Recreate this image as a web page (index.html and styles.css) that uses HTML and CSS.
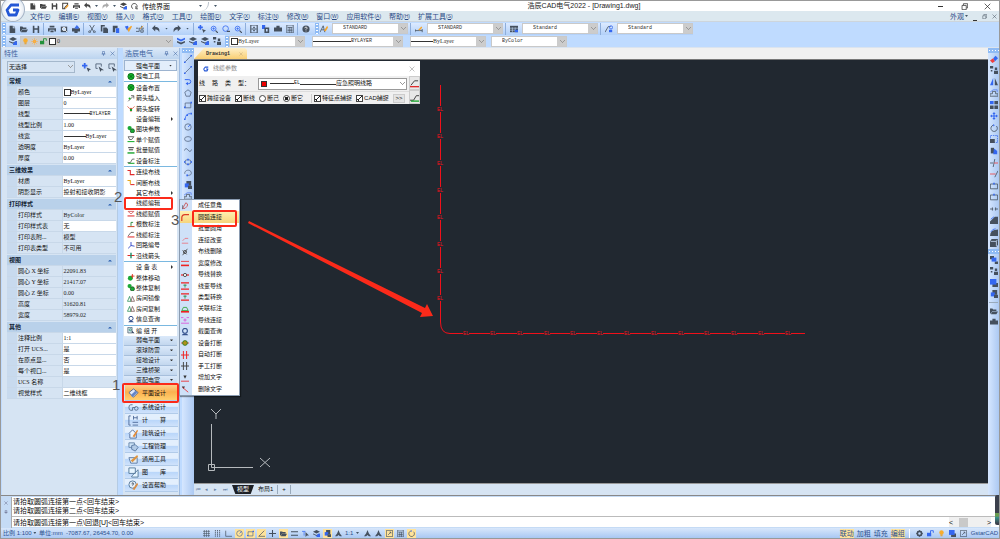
FILE: index.html
```html
<!DOCTYPE html>
<html lang="zh-CN">
<head>
<meta charset="utf-8">
<title>浩辰CAD电气2022 - [Drawing1.dwg]</title>
<link rel="stylesheet" href="styles.css">
</head>
<body>
<svg class="defs" aria-hidden="true">
<symbol id="new" viewBox="0 0 10 10"><path d="M2 1h4v3h3v6H2z M7 1l2 2H7z" fill="currentColor"/></symbol>
<symbol id="open" viewBox="0 0 10 10"><path d="M0 2h3l1 1h4v2H3L1 8H0z M3 5.500h7L8 9H1z" fill="currentColor"/></symbol>
<symbol id="save" viewBox="0 0 10 10"><path d="M1 1h7l1 1v8H1z M3 1v3h4V1z M3 6v4h4V6z" fill="currentColor" fill-rule="evenodd"/></symbol>
<symbol id="saveas" viewBox="0 0 10 10"><path d="M1 1h7v2L4 7v2H1z" fill="none" stroke="currentColor" stroke-width="1.500"/><path d="M4 8l4-5 1.500 1.500L5.500 9z" fill="#f0a030"/></symbol>
<symbol id="print" viewBox="0 0 10 10"><path d="M2 1h6v2H2z M0 4h10v4H8V6H2v2H0z M3 7h4v2H3z" fill="currentColor"/></symbol>
<symbol id="preview" viewBox="0 0 10 10"><path d="M1 2h8v7H1z" fill="currentColor"/><circle cx="5" cy="5" r="2" fill="#bcd6f7" stroke="#fff"/><path d="M6 6l3 3" stroke="#fff"/></symbol>
<symbol id="publish" viewBox="0 0 10 10"><path d="M0 4h10v4H0z M3 8h4v2H3z" fill="currentColor"/><path d="M3 4l3-4 3 3-2 2z" fill="#3c6eea"/></symbol>
<symbol id="cut" viewBox="0 0 10 10"><path d="M2 0l5 8M8 0L3 8" stroke="currentColor"/><circle cx="2" cy="8.500" r="1.200" fill="none" stroke="currentColor"/><circle cx="8" cy="8.500" r="1.200" fill="none" stroke="currentColor"/></symbol>
<symbol id="copy" viewBox="0 0 10 10"><path d="M1 0h5v2H3v6H1z M4 3h4l2 2v5H4z" fill="currentColor"/></symbol>
<symbol id="copyb" viewBox="0 0 10 10"><path d="M0 0h4v5H0z" fill="#3467f0"/><path d="M3 3h6v7H3z M5 5v3h2V5z" fill="currentColor" fill-rule="evenodd"/></symbol>
<symbol id="paste" viewBox="0 0 10 10"><path d="M1 1h6v3H4v5H1z" fill="currentColor"/><path d="M5 4h4v6H5z" fill="#3467f0"/></symbol>
<symbol id="brush" viewBox="0 0 10 10"><path d="M1 2l4-1 1 4-2 2z" fill="#3467f0"/><path d="M4 5l5-4 1 1-4 7z" fill="#f5a52b"/></symbol>
<symbol id="block" viewBox="0 0 10 10"><path d="M0 8h4V4h3M7 1v3h3M6 6h3v3H6zM0 4h3" fill="none" stroke="currentColor"/><path d="M5 5l4-4" stroke="#f5a52b"/></symbol>
<symbol id="undo" viewBox="0 0 10 10"><path d="M0 4l4-4v2.500c4 0 6 2 5 6.500C8 6 6 5.500 4 5.500V8z" fill="currentColor"/></symbol>
<symbol id="redo" viewBox="0 0 10 10"><path d="M10 4L6 0v2.500C2 2.500 0 4.500 1 9c1-3 3-3.500 5-3.500V8z" fill="currentColor"/></symbol>
<symbol id="orbit" viewBox="0 0 10 10"><path d="M3 9A4 4 0 1 1 7 8.700M7 5v4h3" fill="none" stroke="currentColor" stroke-width="1.200"/></symbol>
<symbol id="pan" viewBox="0 0 10 10"><path d="M3 0v6M0 3h6" stroke="#3467f0" stroke-width="2"/><path d="M5 5l5 2-2 1-1 2z" fill="currentColor"/></symbol>
<symbol id="zoomin" viewBox="0 0 10 10"><circle cx="4.500" cy="4.500" r="3" fill="none" stroke="#3467f0"/><path d="M7 7l3 3" stroke="currentColor" stroke-width="1.500"/><path d="M3 4.500h3M4.500 3v3" stroke="#3467f0"/></symbol>
<symbol id="zoomwin" viewBox="0 0 10 10"><circle cx="4.500" cy="4.500" r="3.500" fill="none" stroke="#3467f0"/><path d="M6 8h4" stroke="currentColor" stroke-width="1.500"/></symbol>
<symbol id="cabinet" viewBox="0 0 10 10"><path d="M1 0h8v10H1z M2 5h6M4 3h2M4 7h2" fill="none" stroke="currentColor" stroke-width="1.400"/></symbol>
<symbol id="cart" viewBox="0 0 10 10"><path d="M0 3h10v5H0z M3 1h4v2H3z" fill="currentColor"/></symbol>
<symbol id="calc" viewBox="0 0 10 10"><path d="M1 0h8v10H1z M2 3h6M4 3v7M6.500 3v7M2 6.500h6" fill="none" stroke="currentColor"/></symbol>
<symbol id="gridi" viewBox="0 0 10 10"><path d="M2 0v10M5 0v10M8 0v10M0 2h10M0 5h10M0 8h10" fill="none" stroke="currentColor" stroke-width=".8"/></symbol>
<symbol id="vbars" viewBox="0 0 10 10"><path d="M2 0v10M5 0v10M8 0v10" stroke="currentColor" stroke-width="1.200" stroke-dasharray="2 1"/></symbol>
<symbol id="help" viewBox="0 0 10 10"><circle cx="5" cy="5" r="4.500" fill="currentColor"/><path d="M3.500 4c0-2 3-2 3 0L5 5.500V6M5 7v1" stroke="#fff" fill="none"/></symbol>
<symbol id="tstyle" viewBox="0 0 10 10"><path d="M0 9l4-8 2 8M2 6h3" stroke="currentColor" fill="none"/><path d="M5 7l4-6 1 2-3 5z" fill="#f5a52b"/></symbol>
<symbol id="dim" viewBox="0 0 10 10"><path d="M0 7h9M0 5v4M9 5v4" stroke="currentColor"/><path d="M4 6l4-4 1 1-3 4z" fill="#f5a52b"/></symbol>
<symbol id="table" viewBox="0 0 10 10"><path d="M0 1h10v8H0z" fill="currentColor"/><path d="M0 4h10M0 6.500h7M3 3v6M6.500 3v6" stroke="#c8dcf8" stroke-width=".7"/><path d="M6 6h4v3H6z" fill="#3467f0"/></symbol>
<symbol id="leader" viewBox="0 0 10 10"><path d="M0 9L4 2h3" stroke="currentColor" fill="none"/><circle cx="7.500" cy="3" r="2" fill="none" stroke="#3467f0"/><path d="M5 6h4v3H5z" fill="#3467f0"/></symbol>
<symbol id="layers" viewBox="0 0 10 10"><path d="M5 0l5 2.500L5 5 0 2.500z M0 5l5 2 5-2v1.200L5 8.500 0 6.200z" fill="currentColor"/><path d="M5 8l3-3 2 1v4H5z" fill="#3467f0"/></symbol>
<symbol id="layersb" viewBox="0 0 10 10"><path d="M0 1l5 2 5-2v2L5 5.500 0 3z" fill="#3467f0"/><path d="M0 5l5 2 5-2v2L5 9.500 0 7z" fill="currentColor"/></symbol>
<symbol id="bulb" viewBox="0 0 10 10"><circle cx="5" cy="3.500" r="3.200" fill="#f8ad2d"/><path d="M3.500 6h3v3h-3z" fill="#e2a744"/></symbol>
<symbol id="sun" viewBox="0 0 10 10"><circle cx="5" cy="5" r="2.500" fill="#f8a52d"/><path d="M5 0v10M0 5h10M1.500 1.500l7 7M8.500 1.500l-7 7" stroke="#f8b24d" stroke-width=".8"/></symbol>
<symbol id="lock" viewBox="0 0 10 10"><path d="M0 4h6v5H0z" fill="currentColor"/><path d="M5 5V1h4v3" fill="none" stroke="currentColor" stroke-width="1.300"/></symbol>
<symbol id="gearring" viewBox="0 0 10 10"><circle cx="5" cy="5" r="3" fill="none" stroke="currentColor" stroke-width="2.400"/><path d="M5 0v2M5 8v2M0 5h2M8 5h2M1.500 1.500l1 1M8.500 8.500l-1-1M8.500 1.500l-1 1M1.500 8.500l1-1" stroke="currentColor"/></symbol>
<symbol id="line" viewBox="0 0 10 10"><path d="M1.500 8.500l7-7" stroke="#596b86"/><path d="M0 8h2v2H0zM8 0h2v2H8z" fill="#3467f0"/></symbol>
<symbol id="pline" viewBox="0 0 10 10"><path d="M1 2h5a2 2 0 0 1 0 5H4" fill="none" stroke="#3467f0" stroke-width="1.200"/><path d="M2 7l3-2v4z" fill="#3467f0"/></symbol>
<symbol id="poly" viewBox="0 0 10 10"><path d="M5 1l4 3-1.500 5h-5L1 4z" fill="none" stroke="#596b86"/></symbol>
<symbol id="rect" viewBox="0 0 10 10"><path d="M1.500 2.500h7v6h-7z" fill="none" stroke="#596b86"/><path d="M0 7h2v2H0zM8 1h2v2H8z" fill="#3467f0"/></symbol>
<symbol id="arc" viewBox="0 0 10 10"><path d="M1.500 8.500Q2 2 8 2" fill="none" stroke="#3467f0"/><path d="M0 8h2v2H0zM8 1h2v2H8zM3 3h2v2H3z" fill="#3467f0"/></symbol>
<symbol id="circle" viewBox="0 0 10 10"><circle cx="5" cy="5" r="4" fill="none" stroke="#596b86"/><path d="M5 5l3-3" stroke="#3467f0"/></symbol>
<symbol id="ellipse" viewBox="0 0 10 10"><ellipse cx="5" cy="5" rx="4.300" ry="3" fill="none" stroke="#596b86"/></symbol>
<symbol id="spline" viewBox="0 0 10 10"><path d="M0 6q2.500-5 5-1t5-1" fill="none" stroke="#596b86"/></symbol>
<symbol id="ellipseb" viewBox="0 0 10 10"><ellipse cx="5" cy="5" rx="4" ry="3" fill="none" stroke="#596b86"/><path d="M0 4h2v2H0zM8 4h2v2H8zM4 1h2v2H4zM4 7h2v2H4z" fill="#3467f0"/></symbol>
<symbol id="earc" viewBox="0 0 10 10"><path d="M1 6C0 1 8 0 9 4s-3 4-5 4" fill="none" stroke="#596b86"/><path d="M3 7h2v2H3z" fill="#3467f0"/></symbol>
<symbol id="stack" viewBox="0 0 10 10"><path d="M3 0h6v6H3z" fill="currentColor"/><path d="M1 3h5v5H1z" fill="#3467f0"/><path d="M5 6h5v4H5z" fill="currentColor"/></symbol>
<symbol id="eraser" viewBox="0 0 10 10"><path d="M4 4l3-3 3 3-4 4z" fill="#3467f0"/><path d="M4 4l2 4-3 2-3-3z" fill="#ee4040"/></symbol>
<symbol id="copies" viewBox="0 0 10 10"><path d="M0 0h4v3H0zM6 2h3v3H6zM1 5h2v2H1zM5 6h5v4H5z" fill="currentColor"/></symbol>
<symbol id="mirror" viewBox="0 0 10 10"><path d="M4 0v9H0z" fill="#3467f0"/><path d="M6 0v9h4z" fill="currentColor"/></symbol>
<symbol id="offset" viewBox="0 0 10 10"><path d="M0 9V6h3V3h4v3h3v3z" fill="none" stroke="currentColor"/><path d="M0 4l4-3h5v3" fill="none" stroke="#5a82ef"/></symbol>
<symbol id="array" viewBox="0 0 10 10"><path d="M5.500 0H10v4H5.500zM0 5.500h4.500V10H0zM5.500 5.500H10V10H5.500z" fill="currentColor"/><path d="M0 0h4.500v4H0z" fill="#3467f0"/></symbol>
<symbol id="move" viewBox="0 0 10 10"><path d="M5 0l2 2.500H5.700v1.800h1.800V3L10 5 7.500 7V5.700H5.700v1.800H7L5 10 3 7.500h1.300V5.700H2.500V7L0 5l2.500-2v1.300h1.800V2.500H3z" fill="#3467f0"/></symbol>
<symbol id="rotate" viewBox="0 0 10 10"><path d="M4 1.500A4 4 0 1 0 8 2.500" fill="none" stroke="currentColor"/><path d="M4 0v3l2-1.500z" fill="#3467f0"/></symbol>
<symbol id="scale" viewBox="0 0 10 10"><path d="M.5.500h9v9h-9z" fill="none" stroke="#3467f0" stroke-dasharray="2 1"/><path d="M0 5h6v5H0z" fill="currentColor"/></symbol>
<symbol id="stretch" viewBox="0 0 10 10"><path d="M1 1h4v7H1z" fill="currentColor"/><path d="M5 2l4 3v4H4z" fill="#3467f0"/></symbol>
<symbol id="trim" viewBox="0 0 10 10"><path d="M4 10L6 0M0 5h4" stroke="currentColor"/><path d="M5 5h5" stroke="#ee4040"/></symbol>
<symbol id="extend" viewBox="0 0 10 10"><path d="M6 9l4-8" stroke="currentColor"/><path d="M0 5h7" stroke="#ee4040"/></symbol>
<symbol id="break" viewBox="0 0 10 10"><path d="M.5 2.500h9v6h-9z" fill="none" stroke="currentColor"/><path d="M4 1h2v2H4z" fill="#3467f0"/></symbol>
<symbol id="join" viewBox="0 0 10 10"><path d="M0 5h4M6 5h4M3 3v4M7 3v4" stroke="currentColor"/></symbol>
<symbol id="chamfer" viewBox="0 0 10 10"><path d="M0 7l6-6h4v9H0z" fill="currentColor"/><path d="M1 4l4-3" stroke="#3467f0"/></symbol>
<symbol id="fillet" viewBox="0 0 10 10"><path d="M0 10q0-8 10-8v8z" fill="currentColor"/><path d="M1 5q2-4 6-4" fill="none" stroke="#3467f0"/></symbol>
<symbol id="explode" viewBox="0 0 10 10"><path d="M0 3l2-3h8v7l-2 3H0z" fill="currentColor"/><path d="M1 3h7v6M8 3l1-2" stroke="#c8dcf8" fill="none"/></symbol>
<symbol id="front" viewBox="0 0 10 10"><path d="M0 0h5v4H0zM6 7h4v3H6z" fill="currentColor"/><path d="M2 2h6v5H2z" fill="#3467f0"/></symbol>
<symbol id="back" viewBox="0 0 10 10"><path d="M3 5h7v5H3z" fill="currentColor"/><path d="M0 0h8v7H0z" fill="#3467f0"/></symbol>
<symbol id="dot" viewBox="0 0 10 10"><circle cx="5" cy="5" r="4.500" fill="#16b82b" stroke="#065d13"/><path d="M2 2l6 6M8 2L2 8" stroke="#045514"/></symbol>
<symbol id="arrowup" viewBox="0 0 10 10"><path d="M1 9l7-7M5 1h4v4" fill="none" stroke="#333"/><circle cx="3" cy="5" r="1.500" fill="#10b010"/></symbol>
<symbol id="arrowdn" viewBox="0 0 10 10"><path d="M0 2l3 3h4l3-3M5 4v6" stroke="#d32" fill="none"/><circle cx="5" cy="7" r="1.700" fill="#10a020"/></symbol>
<symbol id="gblocks" viewBox="0 0 10 10"><circle cx="3" cy="3" r="3" fill="#19a935"/><circle cx="7" cy="7" r="3" fill="#19a935" stroke="#174718"/></symbol>
<symbol id="gtext" viewBox="0 0 10 10"><path d="M1 1h8L6 5H3z" fill="none" stroke="#333"/><path d="M0 8h10" stroke="#17af2c" stroke-width="1.500"/></symbol>
<symbol id="gbars" viewBox="0 0 10 10"><path d="M1 1h8M2 4h6" stroke="#333" stroke-width="1.400"/><path d="M0 8.500h10" stroke="#17a32b" stroke-width="2"/></symbol>
<symbol id="gslope" viewBox="0 0 10 10"><path d="M0 8h4l3-5h3" fill="none" stroke="#333"/><path d="M1 9h9" stroke="#17a32b" stroke-width="1.500"/></symbol>
<symbol id="redstep" viewBox="0 0 10 10"><path d="M0 2h4v6h6" fill="none" stroke="#e02b2b" stroke-width="1.500"/></symbol>
<symbol id="goldstep" viewBox="0 0 10 10"><path d="M0 2h4v5" fill="none" stroke="#e8a51b" stroke-width="1.500"/><path d="M4 8h6" stroke="#e02b2b" stroke-width="1.500"/></symbol>
<symbol id="redtext" viewBox="0 0 10 10"><path d="M1 2h8L6 5H4z" fill="none" stroke="#c33"/><path d="M0 8.500h10" stroke="#e02b2b" stroke-width="1.500"/></symbol>
<symbol id="redslope" viewBox="0 0 10 10"><path d="M1 7l4-5h4" fill="none" stroke="#333"/><path d="M0 8.500h10" stroke="#e02b2b" stroke-width="1.500"/></symbol>
<symbol id="count" viewBox="0 0 10 10"><path d="M5 7V2h3" fill="none" stroke="#17812b" stroke-width="1.200"/><path d="M0 8h10" stroke="#d04a2b" stroke-width="1.500"/></symbol>
<symbol id="bluefork" viewBox="0 0 10 10"><path d="M1 9l4-4V0M5 5l5 1" fill="none" stroke="#3146c7" stroke-width="1.300"/></symbol>
<symbol id="plus" viewBox="0 0 10 10"><path d="M0 5h10" stroke="#e02b2b" stroke-width="1.500"/><path d="M5 1v8" stroke="#188b65" stroke-width="2"/></symbol>
<symbol id="movedot" viewBox="0 0 10 10"><circle cx="4" cy="6" r="3.500" fill="#19a935"/><path d="M5 3h5M7 0v6" stroke="#d32" stroke-width="1.300"/></symbol>
<symbol id="houses" viewBox="0 0 10 10"><path d="M0 9l3-7 2 7z" fill="none" stroke="#16864a"/><path d="M5 9l2-7 3 7z" fill="none" stroke="#704b4b"/></symbol>
<symbol id="person" viewBox="0 0 10 10"><circle cx="5" cy="3.500" r="3" fill="none" stroke="#34518d" stroke-width="1.400"/><path d="M1 9c1-3 7-3 8 0z" fill="#34518d"/></symbol>
<symbol id="group" viewBox="0 0 10 10"><path d="M.5.500h6v8h-6z" fill="#d5e6ef" stroke="#456"/><circle cx="4" cy="4" r="1.500" fill="none" stroke="#286"/><path d="M6 5l4 4H7z" fill="#235"/></symbol>
<symbol id="anyangle" viewBox="0 0 10 10"><path d="M2 8L6 1q5 2-1 7z" fill="none" stroke="#c44"/><path d="M2 4v5" stroke="#567"/></symbol>
<symbol id="round" viewBox="0 0 10 10"><path d="M1 10V6q0-4 4-4h5" fill="none" stroke="#db3b25" stroke-width="1.500"/></symbol>
<symbol id="change" viewBox="0 0 10 10"><path d="M1 9h8M2 6l3-3h4" fill="none" stroke="#eb6f78"/></symbol>
<symbol id="del" viewBox="0 0 10 10"><path d="M2 9l6-8M2 3l5 5" stroke="#444"/><circle cx="5" cy="5" r="2" fill="none" stroke="#444"/></symbol>
<symbol id="thick" viewBox="0 0 10 10"><path d="M0 3h10" stroke="#e22"/><path d="M0 8h10" stroke="#e22" stroke-width="2"/></symbol>
<symbol id="swap" viewBox="0 0 10 10"><path d="M0 5h10" stroke="#e22" stroke-width="1.500"/><circle cx="5" cy="5" r="2" fill="#fff" stroke="#333"/></symbol>
<symbol id="ired" viewBox="0 0 10 10"><path d="M0 1h10M0 9h10" stroke="#e22" stroke-width="1.500"/><path d="M5 3v4M3 4h4" stroke="#188a40"/></symbol>
<symbol id="stamp" viewBox="0 0 10 10"><path d="M1 7l2-4h4l2 4z" fill="none" stroke="#26a22a"/><path d="M0 8.500h10" stroke="#e22" stroke-width="2"/></symbol>
<symbol id="ipink" viewBox="0 0 10 10"><path d="M0 2h3M7 2h3M0 9h10M5 3v4M3 5h4" stroke="#dc4ad8"/></symbol>
<symbol id="devbreak" viewBox="0 0 10 10"><path d="M0 5h10" stroke="#d32"/><circle cx="5" cy="5" r="3" fill="#b09218" stroke="#237620"/></symbol>
<symbol id="hashred" viewBox="0 0 10 10"><path d="M0 5h10M3 0v10M7 0v10" stroke="#e22" stroke-width="1.200"/></symbol>
<symbol id="hash" viewBox="0 0 10 10"><path d="M0 5h10M3 0v10M7 0v10" stroke="#444" stroke-width="1.200"/></symbol>
<symbol id="addt" viewBox="0 0 10 10"><path d="M3 2h4L5 6z" fill="#333"/><path d="M0 9h10" stroke="#e22"/></symbol>
<symbol id="delt" viewBox="0 0 10 10"><path d="M1 2h4L3 5z" fill="#333"/><path d="M2 3l7 6" stroke="#e22"/></symbol>
<symbol id="plan" viewBox="0 0 12 12"><path d="M1 5l5-4 5 4-5 5z" fill="#dfe9fb" stroke="#48618d"/><path d="M3 8l5-5 2 2-5 5z" fill="#6285c7"/></symbol>
<symbol id="system" viewBox="0 0 12 12"><path d="M5 3H3Q1 3 1 6t2 3h2V6M5 6h3" fill="none" stroke="#56708d"/><circle cx="9" cy="7" r="2" fill="none" stroke="#56708d"/></symbol>
<symbol id="ruler" viewBox="0 0 12 12"><path d="M3 1H1v10h2M5 8h6M6 1v4M10 1v4M6 3h4M5 11h6" fill="none" stroke="#4f6b9a"/></symbol>
<symbol id="house" viewBox="0 0 12 12"><path d="M1 6l4-4 4 4v5H2V6" fill="#eef6ff" stroke="#4f6b9a"/><path d="M5 9l5-7 1 1-4 7z" fill="#e48d3a"/></symbol>
<symbol id="boxes" viewBox="0 0 12 12"><path d="M1 2h6v5H1z" fill="#cbe2f7" stroke="#6887ab"/><path d="M4 5l4-1 3 3-3 4-4-2z" fill="#b2cbe7" stroke="#5a7aa3"/></symbol>
<symbol id="toolkit" viewBox="0 0 12 12"><path d="M1 4h9v6H3z" fill="#e0ecf6" stroke="#5a7aa3"/><path d="M3 7l7-6 1 2-6 6z" fill="#dd9542"/></symbol>
<symbol id="library" viewBox="0 0 12 12"><path d="M1 1h7v6H1zM4 10L11 3v8H4z" fill="#e6f5ff" stroke="#54789a"/></symbol>
<symbol id="assist" viewBox="0 0 12 12"><circle cx="5" cy="5" r="4" fill="#e5eef8" stroke="#54789a"/><path d="M4 4q2-2 2 0L5 6" fill="none" stroke="#345"/><path d="M5 10l5-7 1 2-4 6z" fill="#d98e46"/></symbol>
<symbol id="ortho" viewBox="0 0 10 10"><path d="M1 1v8h9" fill="none" stroke="currentColor"/></symbol>
<symbol id="angle" viewBox="0 0 10 10"><path d="M9 1L1 9h9" fill="none" stroke="currentColor"/></symbol>
<symbol id="cross" viewBox="0 0 10 10"><path d="M5 0v10M0 5h10" stroke="currentColor" stroke-width="1.500"/></symbol>
<symbol id="bars" viewBox="0 0 10 10"><path d="M0 2.500h10M0 7.500h10" stroke="currentColor" stroke-width="1.500"/></symbol>
<symbol id="person2" viewBox="0 0 10 10"><path d="M5 0l2 5 3 4H7L5 7 3 9H0l3-4z" fill="currentColor"/></symbol>
<symbol id="cursor" viewBox="0 0 10 10"><path d="M0 2h5M3 2v6" stroke="#3467f0"/><path d="M5 3l5 5H7l-2 2z" fill="currentColor"/></symbol>
<symbol id="selcur" viewBox="0 0 10 10"><path d="M3 6H1V1h6v3" stroke="#55657a" fill="none"/><path d="M4 4l6 4H7l-1 2z" fill="currentColor"/></symbol>
<symbol id="expand" viewBox="0 0 10 10"><path d="M.5.500h9v9h-9zM3 7l4-4M5 3h2v2" fill="none" stroke="currentColor"/></symbol>
<symbol id="win" viewBox="0 0 10 10"><path d="M1.500 3.500h6v6h-6zM3.500 3V1h6v6H8" fill="none" stroke="currentColor"/></symbol>
<symbol id="close" viewBox="0 0 10 10"><path d="M1 1l8 8M9 1L1 9" stroke="currentColor"/></symbol>
<symbol id="pin" viewBox="0 0 10 10"><path d="M3 1h4v5H3zM1 6h8M5 6v4" fill="none" stroke="currentColor"/></symbol>
<symbol id="glogo" viewBox="0 0 16 16"><path d="M14 3H6L2 8l2 5h7l2-5H8" fill="none" stroke="#2457d5" stroke-width="2.800" stroke-linejoin="round"/></symbol>
</svg>

<div class="app">
<header class="titlebar">
  <div class="quick">
    <svg><use href="#new"/></svg><svg><use href="#open"/></svg><svg><use href="#save"/></svg><svg><use href="#saveas"/></svg><svg><use href="#print"/></svg><svg><use href="#undo"/></svg><i class="caret"></i><svg class="dim"><use href="#redo"/></svg><i class="caret"></i><svg><use href="#layers"/></svg><svg><use href="#orbit"/></svg>
    <select class="workspace" aria-label="工作空间"><option>传统界面</option></select><i class="caret"></i>
  </div>
  <i class="caret more"></i>
  <h1>浩辰CAD电气2022 - [Drawing1.dwg]</h1>
  <div class="winctl"><button aria-label="最小化"><b class="min"></b></button><button aria-label="还原"><svg><use href="#win"/></svg></button><button aria-label="关闭"><svg><use href="#close"/></svg></button></div>
</header>
<nav class="menubar">
  <button>文件<small>(<u>F</u>)</small></button><button>编辑<small>(<u>E</u>)</small></button><button>视图<small>(<u>V</u>)</small></button><button>插入<small>(<u>I</u>)</small></button><button>格式<small>(<u>O</u>)</small></button><button>工具<small>(<u>T</u>)</small></button><button>绘图<small>(<u>D</u>)</small></button><button>文字<small>(<u>X</u>)</small></button><button>标注<small>(<u>N</u>)</small></button><button>修改<small>(<u>M</u>)</small></button><button>窗口<small>(<u>W</u>)</small></button><button>应用软件<small>(<u>A</u>)</small></button><button>帮助<small>(<u>H</u>)</small></button><button>扩展工具<small>(<u>S</u>)</small></button>
  <div class="docctl"><button>外观<i class="caret"></i></button><b class="min"></b><svg><use href="#win"/></svg><svg><use href="#close"/></svg></div>
</nav>
<div class="logo"><svg><use href="#glogo"/></svg></div>

<div class="toolbars">
  <div class="bar">
    <i class="grip"></i>
    <div class="set"><svg><use href="#new"/></svg><svg><use href="#open"/></svg><svg><use href="#save"/></svg></div>
    <div class="set"><svg><use href="#print"/></svg><svg><use href="#preview"/></svg><svg><use href="#publish"/></svg></div>
    <div class="set"><svg><use href="#cut"/></svg><svg><use href="#copy"/></svg><svg><use href="#paste"/></svg><svg><use href="#brush"/></svg><svg><use href="#block"/></svg></div>
    <div class="set"><svg><use href="#undo"/></svg><i class="caret"></i><svg><use href="#redo"/></svg><i class="caret"></i></div>
    <div class="set"><svg><use href="#pan"/></svg><svg><use href="#zoomin"/></svg><svg><use href="#zoomwin"/></svg><svg><use href="#zoomin"/></svg></div>
    <div class="set"><svg><use href="#cabinet"/></svg><svg><use href="#copyb"/></svg><svg><use href="#cart"/></svg><svg><use href="#calc"/></svg></div>
    <div class="set last"><svg><use href="#help"/></svg></div>
    <i class="grip"></i>
    <div class="style"><svg><use href="#tstyle"/></svg><span class="combo"><select class="mono" aria-label="文字样式"><option>STANDARD</option></select></span></div>
    <div class="style"><svg><use href="#dim"/></svg><span class="combo"><select class="mono" aria-label="标注样式"><option>STANDARD</option></select></span></div>
    <div class="style"><svg><use href="#table"/></svg><span class="combo"><select class="mono" aria-label="表格样式"><option>Standard</option></select></span></div>
    <div class="style"><svg><use href="#leader"/></svg><span class="combo"><select class="mono" aria-label="引线样式"><option>Standard</option></select></span></div>
  </div>
  <div class="bar">
    <i class="grip"></i>
    <div class="layerbox"><svg><use href="#layers"/></svg>
      <span class="combo layer"><span class="marks"><svg><use href="#bulb"/></svg><svg><use href="#sun"/></svg><svg class="green"><use href="#lock"/></svg><b class="swatch"></b></span><select aria-label="图层"><option>0</option></select></span>
      <svg><use href="#layersb"/></svg><svg><use href="#layers"/></svg><svg><use href="#layers"/></svg><svg><use href="#copies"/></svg></div>
    <i class="grip"></i>
    <span class="combo color"><b class="swatch"></b><select aria-label="颜色"><option>ByLayer</option></select></span>
    <span class="combo ltype"><b class="rule"></b><select class="mono" aria-label="线型"><option>BYLAYER</option></select></span>
    <span class="combo lweight"><b class="rule"></b><select aria-label="线宽"><option>ByLayer</option></select></span>
    <span class="combo pstyle"><select class="mono" aria-label="打印样式"><option>ByColor</option></select></span>
  </div>
</div>

<main class="work">
  <aside class="props">
    <div class="phead"><h2>特性</h2><svg><use href="#pin"/></svg><svg><use href="#close"/></svg></div>
    <div class="pick"><span class="selbox"><select aria-label="选择"><option>无选择</option></select></span><svg><use href="#pan"/></svg><svg><use href="#selcur"/></svg><svg><use href="#selcur"/></svg></div>
    <table>
      <tr class="sec"><th colspan="2">常规</th></tr>
      <tr><th>颜色</th><td><b class="swatch"></b>ByLayer</td></tr>
      <tr><th>图层</th><td>0</td></tr>
      <tr><th>线型</th><td class="mono"><b class="rule"></b>BYLAYER</td></tr>
      <tr><th>线型比例</th><td>1.00</td></tr>
      <tr><th>线宽</th><td><b class="rule short"></b>ByLayer</td></tr>
      <tr><th>透明度</th><td>ByLayer</td></tr>
      <tr><th>厚度</th><td>0.00</td></tr>
      <tr class="sec"><th colspan="2">三维效果</th></tr>
      <tr><th>材质</th><td>ByLayer</td></tr>
      <tr><th>阴影显示</th><td>投射和接收阴影</td></tr>
      <tr class="sec"><th colspan="2">打印样式</th></tr>
      <tr class="ro"><th>打印样式</th><td>ByColor</td></tr>
      <tr><th>打印样式表</th><td>无</td></tr>
      <tr class="ro"><th>打印表附...</th><td>模型</td></tr>
      <tr class="ro"><th>打印表类型</th><td>不可用</td></tr>
      <tr class="sec"><th colspan="2">视图</th></tr>
      <tr class="ro"><th>圆心 X 坐标</th><td>22091.83</td></tr>
      <tr class="ro"><th>圆心 Y 坐标</th><td>21417.07</td></tr>
      <tr class="ro"><th>圆心 Z 坐标</th><td>0.00</td></tr>
      <tr class="ro"><th>高度</th><td>31620.81</td></tr>
      <tr class="ro"><th>宽度</th><td>58979.02</td></tr>
      <tr class="sec"><th colspan="2">其他</th></tr>
      <tr><th>注释比例</th><td>1:1</td></tr>
      <tr><th>打开 UCS...</th><td>是</td></tr>
      <tr><th>在原点显...</th><td>否</td></tr>
      <tr><th>每个视口...</th><td>是</td></tr>
      <tr class="ro"><th>UCS 名称</th><td></td></tr>
      <tr><th>视觉样式</th><td>二维线框</td></tr>
    </table>
  </aside>

  <aside class="tools">
    <div class="phead"><h2>浩辰电气</h2><svg><use href="#pin"/></svg><svg><use href="#close"/></svg></div>
    <div class="toollist">
      <button class="cat top">强电平面<i></i></button>
      <button><svg><use href="#dot"/></svg>强电工具</button>
      <hr>
      <button><svg><use href="#dot"/></svg>设备布置</button>
      <button><svg><use href="#arrowup"/></svg>箭头插入</button>
      <button><svg><use href="#arrowdn"/></svg>箭头旋转</button>
      <button class="sub">设备编辑<i></i></button>
      <button><svg><use href="#gblocks"/></svg>图块参数</button>
      <button><svg><use href="#gtext"/></svg>单个赋值</button>
      <button><svg><use href="#gbars"/></svg>批量赋值</button>
      <button><svg><use href="#gslope"/></svg>设备标注</button>
      <hr>
      <button><svg><use href="#redstep"/></svg>连续布线</button>
      <button><svg><use href="#goldstep"/></svg>间断布线</button>
      <button class="sub">其它布线<i></i></button>
      <button class="sub">线缆编辑</button>
      <button><svg><use href="#redtext"/></svg>线缆赋值</button>
      <button><svg><use href="#count"/></svg>根数标注</button>
      <button><svg><use href="#redslope"/></svg>线缆标注</button>
      <button><svg><use href="#bluefork"/></svg>回路编号</button>
      <button><svg><use href="#plus"/></svg>沿线箭头</button>
      <hr>
      <button class="sub">设 备 表<i></i></button>
      <button><svg><use href="#movedot"/></svg>整体移动</button>
      <button><svg><use href="#gblocks"/></svg>整体复制</button>
      <button><svg><use href="#houses"/></svg>房间镜像</button>
      <button><svg><use href="#houses"/></svg>房间复制</button>
      <button><svg><use href="#person"/></svg>信息查询</button>
      <hr>
      <button><svg><use href="#group"/></svg>编 组 开</button>
      <button class="cat">弱电平面<i></i></button>
      <button class="cat">滚球防雷<i></i></button>
      <button class="cat">接地设计<i></i></button>
      <button class="cat">三维桥架<i></i></button>
      <button class="cat cut">变配电室<i></i></button>
    </div>
    <div class="modules">
      <button class="on"><svg><use href="#plan"/></svg>平面设计</button>
      <button><svg><use href="#system"/></svg>系统设计</button>
      <button><svg><use href="#ruler"/></svg>计　　算</button>
      <button><svg><use href="#house"/></svg>建筑设计</button>
      <button><svg><use href="#boxes"/></svg>工程管理</button>
      <button><svg><use href="#toolkit"/></svg>通用工具</button>
      <button><svg><use href="#library"/></svg>图　　库</button>
      <button><svg><use href="#assist"/></svg>设置帮助</button>
    </div>
  </aside>

  <div class="strip draw">
    <i class="vgrip"></i>
    <div class="stripset"><svg><use href="#line"/></svg><svg><use href="#line"/></svg><svg><use href="#pline"/></svg><svg><use href="#poly"/></svg><svg><use href="#rect"/></svg><svg><use href="#arc"/></svg><svg><use href="#circle"/></svg><svg><use href="#ellipse"/></svg><svg><use href="#spline"/></svg><svg><use href="#ellipseb"/></svg><svg><use href="#earc"/></svg><svg><use href="#stack"/></svg><svg><use href="#offset"/></svg></div>
  </div>

  <section class="doc">
    <div class="doctabs"><button>Drawing1<svg><use href="#close"/></svg></button></div>
    <div class="canvas">
      <svg class="drawing">
        <path class="wire" d="M246.500 25V46M246.500 52V73M246.500 79V100M246.500 106V127M246.500 133V154M246.500 160V181M246.500 187V208M246.500 214V235M246.500 241V262Q246.500 273.500 256 273.500H269M275 273.500H296M302 273.500H323M329 273.500H350M356 273.500H376M382 273.500H403M409 273.500H430M436 273.500H457M463 273.500H484M490 273.500H510M516 273.500H537M543 273.500H564M570 273.500H591M597 273.500H611"/>
        <g class="tag"><text x="246" y="51">EL</text><text x="246" y="78">EL</text><text x="246" y="105">EL</text><text x="246" y="132">EL</text><text x="246" y="159">EL</text><text x="246" y="186">EL</text><text x="246" y="213">EL</text><text x="246" y="240">EL</text><text x="272" y="275">EL</text><text x="299" y="275">EL</text><text x="326" y="275">EL</text><text x="353" y="275">EL</text><text x="379" y="275">EL</text><text x="406" y="275">EL</text><text x="433" y="275">EL</text><text x="460" y="275">EL</text><text x="487" y="275">EL</text><text x="513" y="275">EL</text><text x="540" y="275">EL</text><text x="567" y="275">EL</text><text x="594" y="275">EL</text></g>
        <path class="ucs" d="M17.500 364V407.500H59M14.500 404.500h6v6h-6zM17 349l5 5 5-5M22 354v5M66 398l10 9M76 398l-10 9"/>
      </svg>
    </div>
    <div class="layouts"><span class="nav">⏮</span><span class="nav">◂</span><span class="nav">▸</span><span class="nav">⏭</span><button class="cur">模型</button><button>布局1</button><button>+</button></div>
  </section>

  <div class="strip mod">
    <i class="vgrip"></i>
    <div class="stripset long"><svg><use href="#eraser"/></svg><svg><use href="#copies"/></svg><svg><use href="#mirror"/></svg><svg><use href="#offset"/></svg><svg><use href="#array"/></svg><svg><use href="#move"/></svg><svg><use href="#rotate"/></svg><svg><use href="#scale"/></svg><svg><use href="#stretch"/></svg><svg><use href="#trim"/></svg><svg><use href="#extend"/></svg><svg><use href="#break"/></svg><svg><use href="#break"/></svg><svg><use href="#join"/></svg><svg><use href="#chamfer"/></svg><svg><use href="#fillet"/></svg><svg><use href="#explode"/></svg></div>
    <i class="vgrip"></i>
    <div class="stripset four"><svg><use href="#front"/></svg><svg><use href="#copies"/></svg><svg><use href="#back"/></svg><svg><use href="#stack"/></svg></div>
    <i class="vline"></i>
    <div class="stripset two"><svg><use href="#open"/></svg><svg><use href="#cart"/></svg></div>
  </div>
</main>

<section class="command">
  <div class="cmdside"><svg><use href="#close"/></svg><svg><use href="#pin"/></svg></div>
  <div class="cmdbody">
    <div class="history"><p>请拾取圆弧连接第一点&lt;回车结束&gt;</p><p>请拾取圆弧连接第二点&lt;回车结束&gt;</p></div>
    <div class="prompt"><input aria-label="命令行" value="请拾取圆弧连接第一点\回退[U]&lt;回车结束&gt;"><div class="hscroll"><span>&lt;</span><b></b><span>&gt;</span></div></div>
  </div>
  <div class="meter"></div>
</section>

<footer class="status">
  <span class="readout">比例 1:100 <i class="caret"></i> 单位:mm&nbsp; -7087.67, 26454.70, 0.00</span>
  <div class="toggles"><svg><use href="#gridi"/></svg><svg><use href="#vbars"/></svg><svg><use href="#ortho"/></svg><svg class="lit"><use href="#circle"/></svg><svg class="lit"><use href="#rect"/></svg><svg class="lit"><use href="#angle"/></svg><svg><use href="#cross"/></svg><svg class="lit"><use href="#open"/></svg><svg><use href="#bars"/></svg><svg><use href="#cursor"/></svg><svg><use href="#layers"/></svg><svg class="lit"><use href="#stack"/></svg><svg><use href="#person2"/></svg><span>1:1<i class="caret"></i></span><svg><use href="#person2"/></svg><svg><use href="#person2"/></svg><svg class="lit"><use href="#expand"/></svg><svg><use href="#calc"/></svg><svg class="lit"><use href="#rotate"/></svg></div>
  <div class="modes"><button class="lit">联动</button><button>加粗</button><button>填充</button><button class="lit">编组</button></div>
  <div class="tray"><svg><use href="#gearring"/></svg><svg class="blue"><use href="#lock"/></svg><svg><use href="#bulb"/></svg><svg><use href="#back"/></svg><svg><use href="#expand"/></svg><span>GstarCAD</span></div>
</footer>

<form class="dialog">
  <div class="dtitle"><svg><use href="#glogo"/></svg><h2>线缆参数</h2><button type="button" aria-label="关闭"><svg><use href="#close"/></svg></button></div>
  <div class="dbody">
    <div class="drow"><label for="wiretype"><span>线</span><span>路</span><span>类</span><span>型：</span></label><span class="wire-sel"><b class="red"></b><b class="rule"></b><em>EL</em><select id="wiretype"><option>应急照明线路</option></select></span></div>
    <div class="drow opts">
      <label><input type="checkbox" checked>跨接设备</label><label><input type="checkbox" checked>断线</label><label><input type="radio" name="cut">断己</label><label><input type="radio" name="cut" checked>断它</label>
      <label class="split"><input type="checkbox" checked>特征点捕捉</label><label><input type="checkbox" checked>CAD捕捉</label><button type="button" class="morebtn">&gt;&gt;</button>
    </div>
  </div>
  <div class="dside"><button type="button" aria-label="绘制"><svg><use href="#redslope"/></svg></button><button type="button" aria-label="放置"><svg><use href="#gslope"/></svg></button></div>
</form>

<div class="popup" role="menu">
  <button><svg><use href="#anyangle"/></svg>成任意角</button>
  <button class="hot"><svg><use href="#round"/></svg>圆弧连接</button>
  <button><svg></svg>批量圆角</button>
  <button><svg><use href="#change"/></svg>连接改变</button>
  <button><svg><use href="#del"/></svg>布线删除</button>
  <button><svg><use href="#thick"/></svg>宽度修改</button>
  <button><svg><use href="#swap"/></svg>导线替换</button>
  <button><svg><use href="#ired"/></svg>线变导线</button>
  <button><svg><use href="#ired"/></svg>类型转换</button>
  <button><svg><use href="#stamp"/></svg>关联标注</button>
  <button><svg><use href="#ipink"/></svg>导线连接</button>
  <button><svg><use href="#person"/></svg>截面查询</button>
  <button><svg><use href="#devbreak"/></svg>设备打断</button>
  <button><svg><use href="#hashred"/></svg>自动打断</button>
  <button><svg><use href="#hash"/></svg>手工打断</button>
  <button><svg><use href="#addt"/></svg>增加文字</button>
  <button><svg><use href="#delt"/></svg>删除文字</button>
</div>

<svg class="notes">
  <g class="boxes"><rect x="125" y="198" width="47" height="11" rx="1"/><rect x="193" y="211" width="43" height="15" rx="1"/><rect x="123" y="384" width="55" height="18" rx="1"/></g>
  <path class="arrow" d="M249 221L425 308 427 304 433 316 420 317 422 313 248 223z"/>
  <g class="nums"><text x="112" y="390">1</text><text x="114" y="202">2</text><text x="171" y="225">3</text></g>
</svg>
</div>
</body>
</html>
```
FILE: styles.css
```css
* { box-sizing: border-box; }
html, body { height: 100%; margin: 0; }
body {
  font: 6px/9px "Liberation Sans", "Noto Sans CJK SC", sans-serif;
  color: #111;
  background: #bfdbff;
  overflow: hidden;
}
h1, h2, p { margin: 0; font-weight: 400; }
button, select, input { font: inherit; color: inherit; margin: 0; padding: 0; border: 0; background: none; border-radius: 0; }
button { display: flex; align-items: center; white-space: nowrap; }
select { appearance: none; }
svg { flex: none; color: #45505e; }
.defs { position: absolute; width: 0; height: 0; }

.app {
  position: relative;
  height: 100vh;
  display: grid;
  grid-template-rows: 10px 11px 26px minmax(0, 1fr) 33px 10px;
  grid-template-columns: minmax(0, 1fr);
  border: 1px solid #999;
}
.caret { flex: none; width: 3px; height: 2px; background: #456; clip-path: polygon(0 0, 100% 0, 50% 100%); display: inline-block; }
.min { width: 5px; height: 1px; background: #333; }

/* title bar */
.titlebar { display: flex; align-items: center; background: #fff; position: relative; padding-left: 28px; }
.quick { display: flex; align-items: center; gap: 4px; width: 180px; height: 9px; border-right: 1px solid #b9c2cc; border-radius: 0 0 8px 0; padding-right: 6px; }
.quick svg { width: 7px; height: 8px; color: #444; }
.quick svg.dim { color: #aaa; }
.workspace { flex: 1; font-size: 7px; line-height: 9px; }
.more { margin-left: 5px; }
.titlebar h1 { position: absolute; left: 0; right: 0; text-align: center; padding-left: 168px; font-size: 7px; line-height: 8px; color: #222; }
.winctl { margin-left: auto; display: flex; gap: 16px; padding-right: 8px; position: relative; }
.winctl svg { width: 7px; height: 7px; color: #222; }
.winctl button { min-width: 7px; }
.logo {
  position: absolute; left: 0; top: -4px; width: 24px; height: 25px; z-index: 2;
  display: grid; place-items: center; border-radius: 50%;
  background: radial-gradient(#fff 40%, #cdd9e8); border: 1px solid #a4b2c4;
}
.logo svg { width: 16px; height: 16px; }

/* menu bar */
.menubar { display: flex; align-items: center; gap: 8px; padding-left: 29px; background: #dce8ef; border-bottom: 1px solid #cdd5dc; color: #2b4a86; font-size: 7px; }
.menubar small { font-size: 5px; align-self: end; }
.docctl { margin-left: auto; display: flex; align-items: center; gap: 5px; padding-right: 2px; }
.docctl svg { width: 5px; height: 5px; }
.docctl .min { width: 4px; align-self: end; }
.docctl .caret { margin-left: 1px; }

/* toolbars */
.toolbars { display: grid; grid-template-rows: 13px 12px; background: #bfdbff; border-bottom: 1px solid #dbe4ef; }
.bar { display: flex; align-items: center; padding-left: 1px; }
.grip { flex: none; width: 4px; height: 11px; background: radial-gradient(circle, #fff 30%, transparent 40%) 0 0/4px 3px #8fbbf4; }
.set, .style, .layerbox { display: flex; align-items: center; height: 12px; background: linear-gradient(#dceaff, #b2d0f8); }
.set { gap: 4px; padding: 0 3px 0 4px; border-right: 1px solid #8eaedb; }
.grip + .set { padding-left: 2px; }
.set.last { border: 0; padding: 0 5px 0 4px; }
.set svg, .layerbox > svg { width: 8px; height: 8px; }
.set .caret { margin: 0 1px; }
.style { padding: 0 2px 0 4px; gap: 4px; border-right: 1px solid #8eaedb; }
.grip + .style { padding-left: 1px; }
.style:last-child { border: 0; padding-right: 0; }
.style svg { width: 8px; height: 8px; }
.combo { position: relative; display: flex; align-items: center; width: 76px; height: 11px; background: #fff; border: 1px solid #c9c9c9; color: #333; }
.combo::after, .selbox::after, .wire-sel::after {
  content: ""; flex: none; width: 9px; height: 100%;
  background: linear-gradient(45deg, transparent 45%, #999 45% 60%, transparent 60%) 3px 3px/3px 3px no-repeat,
              linear-gradient(-45deg, transparent 45%, #999 45% 60%, transparent 60%) 5px 3px/3px 3px no-repeat, #ccc;
  pointer-events: none;
}
.combo select { flex: 1; min-width: 0; height: 9px; font: 6px/9px "Liberation Serif", serif; }
.combo select.mono, .mono { font: 5px/9px "Liberation Mono", monospace; }
.style select { padding-left: 10px; }
.layerbox { gap: 4px; padding: 0 4px 0 3px; }
.combo.layer { width: 153px; background: #ccc; }
.layerbox > .combo { margin-left: -1px; }
.marks { display: flex; gap: 2px; align-items: center; padding: 0 1px; }
.marks svg { width: 7px; height: 7px; }
.marks .green { color: #23913a; }
.swatch { flex: none; display: inline-block; width: 7px; height: 7px; background: #fff; border: 1px solid #333; vertical-align: middle; }
.combo.color .swatch { margin-left: 1px; }
.combo.ltype, .combo.lweight, .combo.pstyle { margin-left: 7px; }
.combo.ltype { width: 91px; }
.combo.pstyle { margin-left: 5px; }
.combo.pstyle select { padding-left: 10px; }
.rule { flex: none; display: inline-block; width: 26px; height: 1px; background: #333; vertical-align: middle; }
.combo.ltype .rule { width: 38px; }
.combo.lweight .rule { width: 22px; }

/* work area */
.work { display: flex; min-height: 0; padding-left: 1px; }
.phead { display: flex; align-items: center; height: 11px; gap: 4px; padding: 0 2px; color: #3c62a0; background: linear-gradient(#dce9f8, #bcd4ef); }
.phead h2 { flex: 1; font-size: 7px; line-height: 10px; }
.phead svg { width: 5px; height: 5px; color: #3c62a0; }
.props { width: 116px; background: #d6e4f3; border-right: 1px solid #b4cbe4; flex: none; }
.pick { display: flex; align-items: center; gap: 4px; padding: 2px 3px 2px 5px; height: 16px; }
.pick svg { width: 9px; height: 9px; }
.selbox { flex: none; display: flex; width: 68px; height: 12px; border: 1px solid #a5b8cc; background: #d6e4f3; margin-right: 3px; }
.selbox select { flex: 1; min-width: 0; padding-left: 1px; }
.selbox::after { background-color: transparent; height: 10px; }
.props table { width: 109px; margin-left: 5px; border-spacing: 0; table-layout: fixed; font-family: "Liberation Serif", "Noto Sans CJK SC", serif; }
.props tr { height: 11px; }
.props th, .props td { padding: 0; text-align: left; font-weight: 400; line-height: 9px; height: 11px; border-bottom: 1px solid #c8d8e9; white-space: nowrap; overflow: hidden; }
.props th { padding-left: 11px; background: linear-gradient(90deg, #c8daee 10px, #d6e4f3 10px); }
.props td { background: #fff; padding-left: 1px; border-left: 1px solid #c8d8e9; }
.props .ro td { background: #d6e4f3; color: #222; }
.props .sec th { height: 12px; padding: 0 4px 0 2px; font-weight: 700; background: #b9d1ea; border-top: 1px solid #d6e4f3; color: #123; }
.props .sec th::after { content: ""; float: right; width: 4px; height: 2px; margin-top: 4px; background: #2f62b0; clip-path: polygon(50% 0, 100% 100%, 0 100%); }
.props .short { width: 22px; }

.tools { width: 57px; margin-left: 5px; flex: none; display: flex; flex-direction: column; background: #d6e4f3; border-right: 1px solid #9fbbe0; }
.tools .phead { padding-right: 1px; }
.toollist { flex: 1; min-height: 0; display: flex; flex-direction: column; margin: 1px 2px 0 1px; background: #fff; overflow: hidden; }
.toollist button { flex: 1 1 0; min-height: 0; gap: 1px; padding-left: 3px; line-height: 8px; }
.toollist svg { width: 8px; height: 7px; }
.toollist button.cat { flex: none; height: 10px; padding-left: 12px; background: linear-gradient(#dbe9fa, #c3d7ee); border-bottom: 1px solid #a7bfdc; }
.toollist button.top { height: 11px; border: 1px solid #9db4d0; background: #e3eefb; padding-left: 11px; }
.toollist button.cut { height: 8px; overflow: hidden; align-items: start; border: 0; }
.toollist .sub { padding-left: 12px; }
.toollist button i { margin-left: auto; margin-right: 4px; width: 3px; height: 2px; background: #333; clip-path: polygon(0 0, 100% 0, 50% 100%); }
.toollist .cut i { margin-top: 3px; }
.toollist .sub i { width: 2px; height: 4px; clip-path: polygon(0 0, 100% 50%, 0 100%); }
.toollist hr { width: 100%; height: 1px; margin: 0; border: 0; background: #7ab8e0; flex: none; }
.modules { display: grid; grid-template-rows: 17px; grid-auto-rows: 13px; margin: 0 1px 3px 2px; }
.modules button { gap: 3px; padding-left: 3px; border: 1px solid #b1cbe9; border-width: 0 0 1px; background: linear-gradient(#e3effd 45%, #b9d6fa 50%, #cfe2fb); }
.modules .on { padding-top: 2px; background: linear-gradient(#ffd595, #fbb14f 50%, #ffd06f); }
.modules svg { width: 11px; height: 11px; }

.strip { flex: none; display: flex; flex-direction: column; align-items: center; background: linear-gradient(90deg, #d6e7ff, #acc9f2); height: 100%; }
.draw { width: 12px; margin: 0 0 0 2px; }
.mod { width: 11px; }
.vgrip { flex: none; width: 100%; height: 5px; background: radial-gradient(circle, #fff 30%, transparent 40%) 0 1px/3px 3px #8fbbf4; }
.vline { width: 9px; height: 1px; margin: 2px 0; background: #9ab; }
.stripset { display: grid; grid-auto-rows: 1fr; place-items: center; height: 149px; }
.stripset svg { width: 8px; height: 8px; }
.stripset.long { height: 196px; }
.stripset.four { height: 46px; }
.stripset.two { height: 23px; }

.doc { flex: 1; min-width: 0; display: flex; flex-direction: column; background: #f0f0f0; }
.doctabs { height: 12px; display: flex; align-items: end; border-bottom: 1px solid #777; }
.doctabs button { height: 11px; width: 53px; padding: 0 4px 0 12px; justify-content: space-between; font: 700 5px/10px "Liberation Mono", monospace; color: #333; background: linear-gradient(#fff0c8, #f9ce72); clip-path: polygon(10px 0, 51px 0, 100% 2px, 100% 100%, 0 100%); }
.doctabs svg { width: 4px; height: 4px; color: #b59b6c; }
.canvas { flex: 1; min-height: 0; background: #212830; }
.drawing { display: block; width: 100%; height: 100%; }
.wire { fill: none; stroke: #f0101a; stroke-width: 1; }
.tag { font: 5px "Liberation Sans", sans-serif; fill: #f0101a; text-anchor: middle; }
.ucs { fill: none; stroke: #b6babd; stroke-width: 1; }
.layouts { height: 12px; display: flex; align-items: center; background: #d6e4f3; border-top: 1px solid #999; padding-left: 2px; }
.nav { width: 9px; font: 5px/9px "DejaVu Sans", sans-serif; color: #6a83a6; }
.layouts button { height: 9px; padding: 0 4px; border-right: 1px solid #9ab; }
.layouts .cur { background: #1c1f24; color: #fff; padding: 0 5px; clip-path: polygon(0 0, 100% 0, 85% 100%, 15% 100%); border: 0; }

/* command line */
.command { display: flex; position: relative; background: #c5dbf5; border-top: 1px solid #888; padding-top: 1px; font-size: 7px; }
.cmdside { width: 11px; display: flex; flex-direction: column; align-items: center; gap: 5px; padding-top: 4px; border-right: 1px solid #aaa; }
.cmdside svg { width: 4px; height: 4px; color: #557; }
.cmdbody { flex: 1; background: #fff; display: flex; flex-direction: column; margin-bottom: 1px; }
.history { flex: 1; padding-left: 1px; border-bottom: 1px solid #bbb; }
.history p { line-height: 9px; }
.prompt { display: flex; height: 10px; padding-left: 1px; }
.prompt input { flex: 1; }
.hscroll { width: 42px; margin-right: 8px; display: flex; justify-content: space-between; align-items: center; background: #f0f0f0; }
.hscroll b { width: 9px; height: 9px; background: #c9c9c9; margin-right: 14px; }
.meter { position: absolute; right: 0; top: -1px; width: 4px; height: 30px; border-radius: 2px 0 0 2px; background: linear-gradient(#3b404c 60%, #6a9c50 60% 70%, #3a8f88 75%, #3b404c 95%); }

/* status bar */
.status { display: flex; align-items: center; background: linear-gradient(#d8e7fb, #a9c8f3); color: #2b4f8e; padding-left: 2px; }
.readout { width: 199px; white-space: nowrap; }
.readout .caret { vertical-align: middle; margin-right: 1px; }
.toggles { display: flex; align-items: center; gap: 2px; }
.toggles > svg { width: 9px; height: 9px; padding: 1px; }
.toggles > .lit, .modes .lit { background: #ffe39a; }
.toggles span { display: flex; align-items: center; width: 16px; padding-right: 2px; justify-content: space-between; }
.modes { margin-left: auto; display: flex; gap: 3px; padding-right: 4px; border-right: 1px solid #fff; font-size: 7px; }
.tray { display: flex; align-items: center; gap: 4px; padding: 0 1px 0 6px; }
.tray svg { width: 7px; height: 7px; }
.tray .blue { color: #3467f0; }

/* wire parameter dialog */
.dialog { position: absolute; left: 197px; top: 60px; width: 222px; height: 43px; display: grid; grid-template: 15px 1fr / 1fr 11px; background: #f0f0f0; }
.dtitle { grid-column: 1 / 3; display: flex; align-items: center; gap: 4px; background: #fff; padding: 0 5px; }
.dtitle h2 { flex: 1; color: #888; font-size: 6px; }
.dtitle svg { width: 6px; height: 6px; color: #999; }
.dbody { display: grid; grid-template-rows: 15px 13px; }
.drow { display: flex; align-items: center; padding-left: 1px; }
.drow > label[for] { width: 59px; display: flex; gap: 7px; white-space: nowrap; }
.wire-sel { display: flex; align-items: center; width: 149px; height: 12px; background: #fff; border: 1px solid #999; }
.wire-sel .red { width: 6px; height: 6px; background: #e00; border: 1px solid #333; margin: 0 3px 0 2px; }
.wire-sel .rule { width: 24px; }
.wire-sel em { font: 5px/9px "Liberation Mono", monospace; }
.wire-sel select { flex: 1; min-width: 0; padding-left: 36px; background: linear-gradient(#333, #333) 0 5px/36px 1px no-repeat; height: 10px; }
.wire-sel::after { background-color: transparent; height: 10px; }
.opts { gap: 4px; border-top: 1px solid #ddd; }
.opts label { display: flex; align-items: center; gap: 1px; white-space: nowrap; }
.opts input { appearance: none; width: 7px; height: 7px; border: 1px solid #444; background: #fff; }
.opts input[type=checkbox]:checked { background: linear-gradient(45deg, transparent 20%, #222 20% 35%, transparent 35%) 0 2px/3px 3px no-repeat, linear-gradient(-45deg, transparent 40%, #222 40% 60%, transparent 60%) 1px 0/4px 4px no-repeat, #fff; }
.opts input[type=radio] { border-radius: 50%; }
.opts input[type=radio]:checked { background: radial-gradient(#222 40%, #fff 50%); }
.opts .split { border-left: 1px solid #ccc; padding-left: 2px; margin-left: 4px; }
.morebtn { width: 12px; height: 9px; justify-content: center; background: #e4e4e4; border: 1px solid #ccc; margin-left: auto; margin-right: 4px; }
.dside { display: grid; grid-template-rows: 1fr 1fr; }
.dside button { justify-content: center; border: 1px solid #ccc; background: #e8e8e8; }
.dside svg { width: 9px; height: 9px; }

/* flyout menu */
.popup { position: absolute; left: 178px; top: 198px; width: 61px; height: 197px; display: grid; grid-auto-rows: 1fr; border: 1px solid #8a9bb0; background: linear-gradient(90deg, #cfe1f8 12px, #fff 12px); box-shadow: 1px 1px 1px #0006; }
.popup button { gap: 9px; padding-left: 1px; min-height: 0; }
.popup svg { width: 8px; height: 8px; }
.popup .hot { background: linear-gradient(#fff0b4, #f6d57c); }

/* numbered callouts */
.notes { position: absolute; inset: -1px; width: calc(100% + 2px); height: calc(100% + 2px); pointer-events: none; }
.boxes { fill: none; stroke: #fb2a1a; stroke-width: 2; }
.arrow { fill: #fb2a1a; }
.nums { font: 15px "Liberation Sans", sans-serif; fill: #555; }
```
